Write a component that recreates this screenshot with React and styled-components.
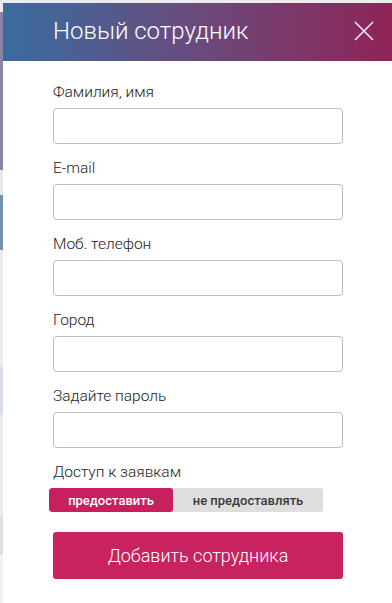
import React, { useState } from "react";
import styled, { createGlobalStyle } from "styled-components";

const GlobalStyle = createGlobalStyle`
  html, body { margin: 0; padding: 0; }
  body {
    font-family: Roboto, "Open Sans", "Liberation Sans", sans-serif;
    background: #ececec;
  }
  * { box-sizing: border-box; }
`;

const Page = styled.div`
  display: flex;
  height: 603px;
  overflow: hidden;
  padding-top: 3px;
`;

const Behind = styled.div`
  width: 3px;
  display: flex;
  flex-direction: column;
  margin-top: -3px;
`;

const Strip = styled.div`
  height: ${(p) => p.h}px;
  background: ${(p) => p.c};
`;

const Modal = styled.div`
  flex: 1;
  background: #fff;
  display: flex;
  flex-direction: column;
`;

const Header = styled.div`
  height: 58px;
  display: flex;
  align-items: center;
  justify-content: space-between;
  padding: 0 18px 2px 50px;
  background: linear-gradient(to right, #396c9f, #6a4a7c 50%, #8f2456);
`;

const Title = styled.h2`
  margin: 0;
  font-size: 24px;
  line-height: 28px;
  font-weight: 300;
  color: #fff;
`;

const Close = styled.button`
  border: 0;
  background: none;
  padding: 0;
  width: 20px;
  height: 20px;
  display: flex;
  cursor: pointer;
`;

const Body = styled.form`
  padding: 22px 49px 0 50px;
  display: flex;
  flex-direction: column;
`;

const Label = styled.label`
  font-size: 15.5px;
  line-height: 18px;
  font-weight: 300;
  color: #222;
  margin-bottom: 7px;
`;

const Input = styled.input`
  height: 36px;
  border: 1px solid #bdbdbd;
  border-radius: 4px;
  margin-bottom: 15px;
  font: inherit;
  padding: 0 10px;
  outline: none;
`;

const Toggle = styled.div`
  display: flex;
  width: 274px;
  height: 24px;
  margin-left: -4px;
  border-radius: 3px;
  overflow: hidden;
  background: #dedede;
`;

const Option = styled.button`
  border: 0;
  width: ${(p) => p.w}px;
  font-family: inherit;
  font-size: 13px;
  font-weight: 500;
  padding: 0;
  cursor: pointer;
  background: ${(p) => (p.active ? "#c8205f" : "#dedede")};
  color: ${(p) => (p.active ? "#fff" : "#3a3a3a")};
  border-radius: 3px;
`;

const Submit = styled.button`
  margin-top: 20px;
  height: 47px;
  border: 0;
  border-radius: 3px;
  background: #c82261;
  color: #fff;
  font-family: inherit;
  font-size: 18px;
  font-weight: 300;
  cursor: pointer;
`;

const fields = ["Фамилия, имя", "E-mail", "Моб. телефон", "Город", "Задайте пароль"];

const strips = [
  [12, "#ececec"],
  [158, "#8c84a6"],
  [25, "#e9e9e9"],
  [55, "#7892b4"],
  [117, "#ececec"],
  [48, "#d6dde6"],
  [100, "#ececec"],
  [40, "#e0e0e0"],
  [48, "#f2f2f2"],
];

export default function App() {
  const [access, setAccess] = useState(true);

  return (
    <>
      <GlobalStyle />
      <Page>
        <Behind>
          {strips.map(([h, c], i) => (
            <Strip key={i} h={h} c={c} />
          ))}
        </Behind>
        <Modal>
          <Header>
            <Title>Новый сотрудник</Title>
            <Close type="button" aria-label="Закрыть">
              <svg width="20" height="20" viewBox="0 0 20 20">
                <path d="M1 1L19 19M19 1L1 19" stroke="#f2e8ef" strokeWidth="1.6" />
              </svg>
            </Close>
          </Header>
          <Body onSubmit={(e) => e.preventDefault()}>
            {fields.map((f) => (
              <React.Fragment key={f}>
                <Label>{f}</Label>
                <Input type={f === "Задайте пароль" ? "password" : "text"} />
              </React.Fragment>
            ))}
            <Label>Доступ к заявкам</Label>
            <Toggle>
              <Option type="button" w={124} active={access} onClick={() => setAccess(true)}>
                предоставить
              </Option>
              <Option type="button" w={150} active={!access} onClick={() => setAccess(false)}>
                не предоставлять
              </Option>
            </Toggle>
            <Submit type="submit">Добавить сотрудника</Submit>
          </Body>
        </Modal>
      </Page>
    </>
  );
}
